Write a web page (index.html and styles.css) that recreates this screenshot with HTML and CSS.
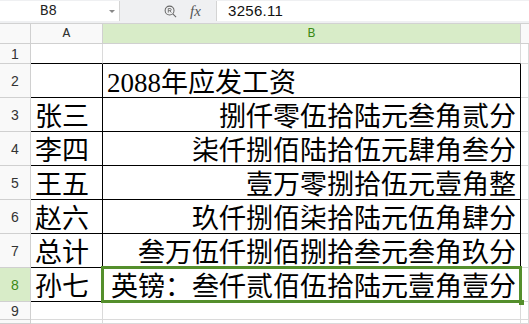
FILE: index.html
```html
<!DOCTYPE html>
<html lang="zh-CN">
<head>
  <meta charset="UTF-8" />
  <title>工资表</title>
  <link rel="stylesheet" href="styles.css">
</head>
<body>
  <!-- Formula bar -->
  <div class="toolbar">
    <div class="namebox">
      <span class="cellref">B8</span>
      <span class="caret"></span>
    </div>
    <div class="tools">
      <svg class="zoom-icon" viewBox="0 0 14 14" aria-hidden="true">
        <circle cx="6" cy="6" r="4.8" />
        <path d="M9.5 9.5 L13 13" />
        <path d="M4.6 8.2 V3.8 H6.6 Q7.8 3.8 7.8 5 Q7.8 6.1 6.6 6.1 H4.6 M6.4 6.1 L7.9 8.2" class="inner" />
      </svg>
      <span class="fx">fx</span>
    </div>
    <div class="formula">3256.11</div>
  </div>

  <!-- Sheet grid -->
  <div class="sheet">
    <div class="cell corner"></div>
    <div class="cell colhead">A</div>
    <div class="cell colhead active">B</div>
    <div class="cell colhead blank"></div>

    <div class="cell rowhead">1</div>
    <div class="cell top-edge"></div>
    <div class="cell top-edge"></div>
    <div class="cell"></div>

    <div class="cell rowhead">2</div>
    <div class="cell boxed"></div>
    <div class="cell boxed left">2088年应发工资</div>
    <div class="cell"></div>

    <div class="cell rowhead">3</div>
    <div class="cell boxed name">张三</div>
    <div class="cell boxed amount">捌仟零伍拾陆元叁角贰分</div>
    <div class="cell"></div>

    <div class="cell rowhead">4</div>
    <div class="cell boxed name">李四</div>
    <div class="cell boxed amount">柒仟捌佰陆拾伍元肆角叁分</div>
    <div class="cell"></div>

    <div class="cell rowhead">5</div>
    <div class="cell boxed name">王五</div>
    <div class="cell boxed amount">壹万零捌拾伍元壹角整</div>
    <div class="cell"></div>

    <div class="cell rowhead">6</div>
    <div class="cell boxed name">赵六</div>
    <div class="cell boxed amount">玖仟捌佰柒拾陆元伍角肆分</div>
    <div class="cell"></div>

    <div class="cell rowhead">7</div>
    <div class="cell boxed name">总计</div>
    <div class="cell boxed amount">叁万伍仟捌佰捌拾叁元叁角玖分</div>
    <div class="cell"></div>

    <div class="cell rowhead active">8</div>
    <div class="cell boxed name">孙七</div>
    <div class="cell boxed selected">英镑：叁仟贰佰伍拾陆元壹角壹分<span class="handle"></span></div>
    <div class="cell"></div>

    <div class="cell rowhead">9</div>
    <div class="cell"></div>
    <div class="cell"></div>
    <div class="cell"></div>

    <div class="cell rowhead"></div>
    <div class="cell"></div>
    <div class="cell"></div>
    <div class="cell"></div>
  </div>
</body>
</html>
```

FILE: styles.css
```css
/* Reset */
* {
  box-sizing: border-box;
  margin: 0;
  padding: 0;
}
body {
  width: 529px;
  height: 324px;
  overflow: hidden;
  background: #fff;
  font-family: "Liberation Sans", "Noto Sans CJK SC", sans-serif;
  color: #000;
}

/* Formula bar */
.toolbar {
  display: flex;
  height: 24px;
  background: #eff0f2;
  border-bottom: 1px solid #d2d2d2;
  padding-top: 1px;
  padding-bottom: 2px;
}
.namebox {
  width: 120px;
  background: #fff;
  border-right: 1px solid #d4d4d4;
  display: flex;
  align-items: center;
  position: relative;
}
.cellref {
  flex: 1;
  text-align: center;
  font-family: "Liberation Mono", monospace;
  font-size: 14px;
  padding-right: 12px;
  color: #222;
}
.caret {
  width: 0;
  height: 0;
  border-left: 3px solid transparent;
  border-right: 3px solid transparent;
  border-top: 3px solid #888;
  margin-right: 4px;
}
.tools {
  width: 96px;
  display: flex;
  align-items: center;
  padding-left: 44px;
  gap: 13px;
}
.zoom-icon {
  width: 13px;
  height: 13px;
  fill: none;
  stroke: #666;
  stroke-width: 1.1;
}
.zoom-icon .inner {
  stroke-width: 0.9;
}
.fx {
  font-family: "Liberation Serif", serif;
  font-style: italic;
  font-size: 15px;
  color: #555;
}
.formula {
  flex: 1;
  background: #fff;
  border-left: 1px solid #d4d4d4;
  font-family: "Liberation Sans", sans-serif;
  font-size: 15px;
  line-height: 20px;
  padding-left: 11px;
  color: #111;
  letter-spacing: 0.3px;
}

/* Sheet */
.sheet {
  display: grid;
  grid-template-columns: 31px 72px 418px 1fr;
  grid-template-rows: 20px 20px repeat(7, 34px) 18px 1fr;
  height: 300px;
}
.cell {
  border-right: 1px solid #dadada;
  border-bottom: 1px solid #dadada;
  font-family: "Liberation Serif", "Noto Sans CJK SC", serif;
  font-size: 27px;
  display: flex;
  align-items: center;
  white-space: nowrap;
  overflow: visible;
}
.corner,
.colhead,
.rowhead {
  background: #f9f9f9;
  border-color: #d0d0d0;
}
.colhead,
.rowhead {
  justify-content: center;
  font-family: "Liberation Sans", sans-serif;
  font-size: 14px;
  color: #333;
}
.colhead {
  font-family: "Liberation Mono", monospace;
  font-size: 13px;
}
.colhead.blank {
  border-right: none;
}
.colhead.active,
.rowhead.active {
  background: #d8ecc8;
  color: #3b8a16;
}

/* Black table borders */
.top-edge {
  border-bottom-color: #000;
}
.boxed {
  border-right-color: #000;
  border-bottom-color: #000;
}
.left,
.name {
  padding-left: 4px;
}
.amount {
  justify-content: flex-end;
  padding-right: 4px;
}

/* Active cell */
.selected {
  position: relative;
  padding-left: 8px;
}
.selected::after {
  content: "";
  position: absolute;
  top: -2px;
  left: -2px;
  right: -2px;
  bottom: -2px;
  border: 3px solid #548f2c;
  pointer-events: none;
}
.handle {
  position: absolute;
  right: -4px;
  bottom: -4px;
  width: 5px;
  height: 5px;
  background: #548f2c;
  z-index: 1;
}
```
